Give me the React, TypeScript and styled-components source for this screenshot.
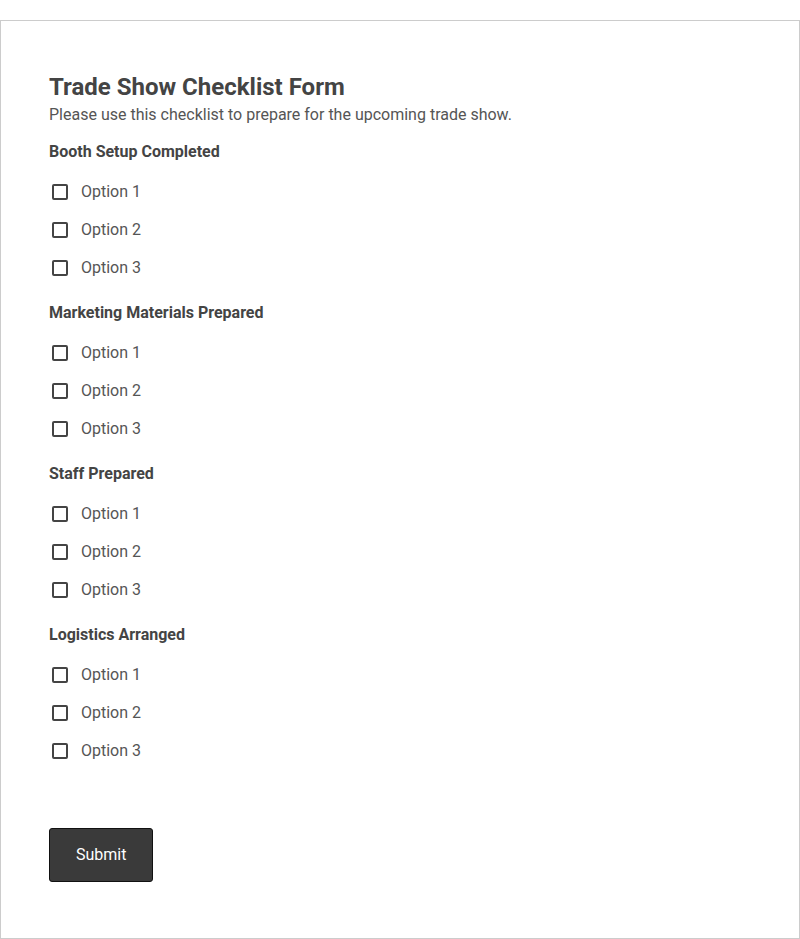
import React from 'react';
import styled, { createGlobalStyle } from 'styled-components';

const GlobalStyle = createGlobalStyle`
	* {
		box-sizing: border-box;
	}
	body {
		margin: 0;
		background: #ffffff;
		font-family: Roboto, 'Liberation Sans', Arial, sans-serif;
	}
`;

const Card = styled.div`
	margin-top: 20px;
	width: 800px;
	border: 1px solid #cccccc;
	padding: 48px 48px 56px 48px;
	background: #ffffff;
`;

const Title = styled.h1`
	margin: 0;
	font-size: 24px;
	line-height: 36px;
	font-weight: 700;
	color: #444444;
`;

const Description = styled.p`
	margin: 0 0 18px 0;
	font-size: 16px;
	color: #555555;
`;

const Section = styled.fieldset`
	border: none;
	margin: 0 0 17px 0;
	padding: 0;
`;

const SectionLabel = styled.legend`
	padding: 0;
	margin: 0 0 11px 0;
	font-size: 16px;
	font-weight: 700;
	color: #444444;
`;

const OptionRow = styled.label`
	display: flex;
	align-items: center;
	height: 38px;
	gap: 13px;
	padding-left: 3px;
	font-size: 16px;
	color: #555555;
	cursor: pointer;
`;

const Box = styled.span`
	width: 16px;
	height: 16px;
	border: 2px solid #444444;
	border-radius: 2px;
	flex-shrink: 0;
	margin-top: 2px;
`;

const SubmitButton = styled.button`
	margin-top: 42px;
	padding: 16px 26px;
	font-family: Roboto, 'Liberation Sans', Arial, sans-serif;
	font-size: 16px;
	line-height: 20px;
	color: #ffffff;
	background: #3a3a3a;
	border: 1px solid #111111;
	border-radius: 3px;
	cursor: pointer;
`;

const sections = [
	'Booth Setup Completed',
	'Marketing Materials Prepared',
	'Staff Prepared',
	'Logistics Arranged',
];

const options = ['Option 1', 'Option 2', 'Option 3'];

const App: React.FC = () => {
	return (
		<>
			<GlobalStyle />
			<Card>
				<Title>Trade Show Checklist Form</Title>
				<Description>
					Please use this checklist to prepare for the upcoming trade show.
				</Description>
				{sections.map((section) => (
					<Section key={section}>
						<SectionLabel>{section}</SectionLabel>
						{options.map((option) => (
							<OptionRow key={option}>
								<Box />
								{option}
							</OptionRow>
						))}
					</Section>
				))}
				<SubmitButton type="button">Submit</SubmitButton>
			</Card>
		</>
	);
};

export default App;
